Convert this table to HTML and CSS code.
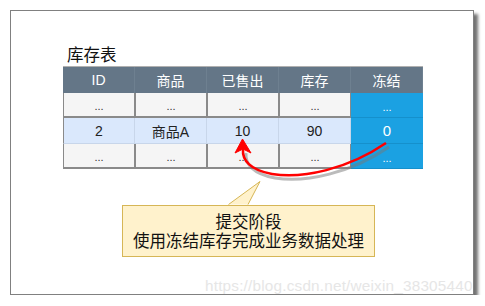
FILE: index.html
```html
<!DOCTYPE html>
<html lang="zh">
<head>
<meta charset="utf-8">
<link rel="stylesheet" href="styles.css">
</head>
<body>
<div class="frame">
  <div class="title">库存表</div>
  <div class="table">
    <div class="h">ID</div><div class="h">商品</div><div class="h">已售出</div><div class="h">库存</div><div class="h">冻结</div>
    <div class="c r1">...</div><div class="c r1">...</div><div class="c r1">...</div><div class="c r1">...</div><div class="c fz">...</div>
    <div class="c r2 first">2</div><div class="c r2">商品A</div><div class="c r2">10</div><div class="c r2">90</div><div class="c fz big">0</div>
    <div class="c r3">...</div><div class="c r3">...</div><div class="c r3">...</div><div class="c r3">...</div><div class="c fz">...</div>
  </div>
  <div class="note">
    <div>提交阶段</div>
    <div>使用冻结库存完成业务数据处理</div>
  </div>
  <svg class="overlay" width="485" height="306" viewBox="0 0 485 306">
    <path d="M228.5 204.5 L260 181.5 L248 204.5" fill="#fff2cc" stroke="#d6b656" stroke-width="1"/>
    <path d="M389 147 C 351 173, 306 183, 275 178 C 253 174, 245 164, 246 153" fill="none" stroke="#777" stroke-opacity="0.5" stroke-width="3"/>
    <path d="M386 143 C 348 169, 303 179, 272 174 C 250 170, 242 160, 243 149" fill="none" stroke="#ff0000" stroke-width="2.5"/>
    <path d="M242.5 139 L235 153 L243 149 L251 153 Z" fill="#ff0000" stroke="#ff0000" stroke-width="1" stroke-linejoin="round"/>
  </svg>
  <div class="wm">https://blog.csdn.net/weixin_38305440</div>
</div>
</body>
</html>
```
FILE: styles.css
```css
html, body {
  margin: 0;
  padding: 0;
  background: #ffffff;
}
body {
  font-family: "Liberation Sans", "Noto Sans CJK SC", sans-serif;
}
.frame {
  position: relative;
  box-sizing: border-box;
  margin: 10px 0 0 10px;
  width: 464px;
  height: 285px;
  border: 1px solid #808080;
  box-shadow: 4px 4px 3px rgba(0, 0, 0, 0.55);
  background: #fff;
  padding: 34px 0 0 52px;
}
.title {
  font-size: 16.5px;
  line-height: 20px;
  color: #111;
  margin-left: 4px;
  height: 21px;
}
.table {
  display: grid;
  grid-template-columns: repeat(5, 72px);
  grid-template-rows: 26px 25px 26px 25px;
  width: 360px;
  border-top: 1px solid #b0b0b0;
}
.table > div {
  display: flex;
  align-items: center;
  justify-content: center;
  box-sizing: border-box;
}
.h {
  background: #647687;
  color: #fff;
  font-size: 14px;
  border-right: 1px solid #6e8090;
}
.c {
  font-size: 14px;
  color: #222;
}
.r1, .r3 {
  background: #f5f5f5;
  border-left: 1px solid #8a8a8a;
  border-right: 1px solid #8a8a8a;
  border-bottom: 2px solid #8a8a8a;
  align-items: flex-end !important;
  padding-bottom: 4px;
  font-size: 11px;
  color: #333;
}
.r2 {
  background: #dae8fc;
  border-right: 1px solid #c8d6ea;
  border-bottom: 1px solid #c8d6ea;
}
.r2.first {
  border-left: 1px solid #8a8a8a;
}
.fz {
  background: #1ba1e2;
  color: #fff;
  border-bottom: 1px solid #1590cc;
  align-items: flex-end !important;
  padding-bottom: 4px;
  font-size: 11px;
}
.fz.big {
  align-items: center !important;
  padding-bottom: 0;
  font-size: 15px;
}
.note {
  box-sizing: border-box;
  margin: 36px 0 0 59px;
  width: 253px;
  height: 52px;
  background: #fff2cc;
  border: 1px solid #d6b656;
  font-size: 16.5px;
  line-height: 19px;
  color: #111;
  text-align: center;
  padding-top: 7px;
}
.overlay {
  position: absolute;
  left: -11px;
  top: -11px;
  pointer-events: none;
}
.wm {
  position: absolute;
  left: 194px;
  top: 266px;
  font-size: 15.3px;
  color: #e6e6e6;
  letter-spacing: 0.2px;
  white-space: nowrap;
}
```
